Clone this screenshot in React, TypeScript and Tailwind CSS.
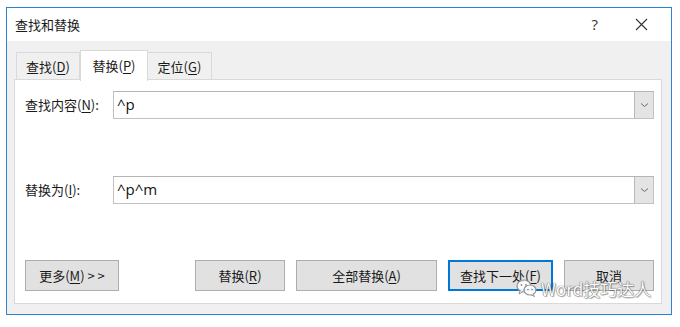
import type { ReactNode } from 'react';

const cjk = "font-['Microsoft_YaHei','Noto_Sans_CJK_SC',sans-serif]";

function Key({ children }: { children: ReactNode }) {
  return <span className="underline underline-offset-2 decoration-1">{children}</span>;
}

function Combo({ value }: { value: string }) {
  return (
    <div className="flex-1 h-[28px] flex border border-[#c2c2c2] border-t-[#b4b4b4] bg-white">
      <div className="flex-1 pl-[3px] flex items-center text-[15px] text-[#111] font-['Open_Sans',sans-serif] leading-none pb-[1px]">
        {value}
      </div>
      <div className="w-[19px] bg-[#e4e4e4] border-l border-[#b9b9b9] flex items-center justify-center">
        <svg width="9" height="6" viewBox="0 0 9 6">
          <path d="M1 1.5 L4.5 4.5 L8 1.5" fill="none" stroke="#6a6a6a" strokeWidth="1" />
        </svg>
      </div>
    </div>
  );
}

function Btn({ w, def, children }: { w: string; def?: boolean; children: ReactNode }) {
  return (
    <div
      className={`${w} h-[31px] flex items-center justify-center bg-[#e1e1e1] text-[13px] text-[#1a1a1a] ${
        def ? 'border-2 border-[#0078d7]' : 'border border-[#adadad]'
      }`}
    >
      {children}
    </div>
  );
}

export default function App() {
  return (
    <div className={`relative w-[680px] h-[327px] bg-white pl-[6px] pt-[7px] ${cjk}`}>
      <div className="w-[666px] h-[308px] border border-[#2a83d4] flex flex-col bg-[#f0f0f0]">
        {/* Title bar */}
        <div className="h-[33px] bg-white flex items-center pl-[8px] text-[13px] text-[#1a1a1a]">
          <span>查找和替换</span>
          <span className="ml-auto mr-[37px] text-[15px] font-['Open_Sans',sans-serif] text-[#333]">?</span>
          <svg width="13" height="13" viewBox="0 0 13 13" className="mr-[23px]">
            <path d="M1 1 L12 12 M12 1 L1 12" stroke="#333" strokeWidth="1.1" />
          </svg>
        </div>

        {/* Tabs */}
        <div className="flex items-end pl-[9px] pt-[9px] h-[39px] text-[13px] text-[#1a1a1a]">
          <div className="w-[64px] h-[28px] border border-b-0 border-[#d9d9d9] flex items-center justify-center">
            查找(<Key>D</Key>)
          </div>
          <div className="relative z-10 w-[68px] h-[31px] -mb-px bg-white border border-b-0 border-[#d9d9d9] flex items-center justify-center">
            替换(<Key>P</Key>)
          </div>
          <div className="w-[64px] h-[28px] border border-b-0 border-l-0 border-[#d9d9d9] flex items-center justify-center">
            定位(<Key>G</Key>)
          </div>
        </div>

        {/* Panel */}
        <div className="ml-[7px] mr-[9px] h-[225px] -mt-px bg-white border border-[#d9d9d9] flex flex-col pl-[10px] pr-[7px] text-[13px] text-[#1a1a1a]">
          <div className="mt-[11px] flex items-center">
            <div className="w-[88px]">
              查找内容(<Key>N</Key>):
            </div>
            <Combo value="^p" />
          </div>
          <div className="mt-[57px] flex items-center">
            <div className="w-[88px]">
              替换为(<Key>I</Key>):
            </div>
            <Combo value="^p^m" />
          </div>
          <div className="mt-[56px] flex items-center">
            <Btn w="w-[94px]">
              <span>
                更多(<Key>M</Key>) &gt; &gt;
              </span>
            </Btn>
            <div className="ml-auto flex gap-[11px]">
              <Btn w="w-[90px]">
                <span>
                  替换(<Key>R</Key>)
                </span>
              </Btn>
              <Btn w="w-[141px]">
                <span>
                  全部替换(<Key>A</Key>)
                </span>
              </Btn>
              <Btn w="w-[105px]" def>
                <span>
                  查找下一处(<Key>F</Key>)
                </span>
              </Btn>
              <Btn w="w-[90px]">
                <span>取消</span>
              </Btn>
            </div>
          </div>
        </div>
      </div>

      {/* Watermark */}
      <div className="absolute left-[516px] top-[278px] flex items-center gap-[3px] opacity-90">
        <svg width="22" height="20" viewBox="0 0 22 20">
          <ellipse cx="8" cy="8" rx="7" ry="6" fill="white" stroke="#8a8a8a" strokeWidth="1.2" />
          <path d="M4 13 L3 16 L7 13.5" fill="white" stroke="#8a8a8a" strokeWidth="1" />
          <ellipse cx="14" cy="12" rx="6" ry="5" fill="white" stroke="#8a8a8a" strokeWidth="1.2" />
          <path d="M17 16 L18.5 18.5 L15 16.8" fill="white" stroke="#8a8a8a" strokeWidth="1" />
          <circle cx="5.5" cy="7" r="0.9" fill="#8a8a8a" />
          <circle cx="10" cy="7" r="0.9" fill="#8a8a8a" />
          <circle cx="12" cy="11.5" r="0.8" fill="#8a8a8a" />
          <circle cx="16" cy="11.5" r="0.8" fill="#8a8a8a" />
        </svg>
        <span className="text-[17px] leading-none text-white [text-shadow:0_0_1px_#555,0_0_1px_#555,1px_1px_1px_rgba(0,0,0,0.35)]">
          Word技巧达人
        </span>
      </div>
    </div>
  );
}
